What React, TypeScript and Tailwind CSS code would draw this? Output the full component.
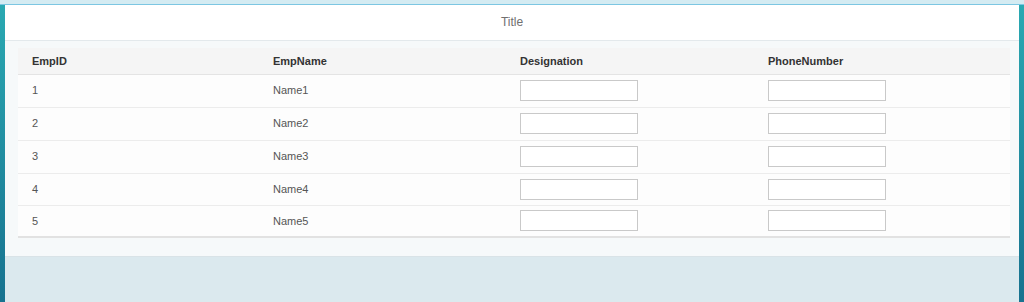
import React from 'react'

type Emp = { id: number; name: string }

const employees: Emp[] = [1, 2, 3, 4, 5].map((n) => ({ id: n, name: `Name${n}` }))
const rowHeights = ['h-[33px]', 'h-[33px]', 'h-[33px]', 'h-[32px]', 'h-[32px]']

export default function App() {
  return (
    <div
      className="flex h-[302px] w-[1024px] flex-col overflow-hidden bg-[#d4ebf2]"
      style={{ fontFamily: '"Liberation Sans", Arial, sans-serif' }}
    >
      {/* top strip */}
      <div className="h-[5px] shrink-0 border-b border-[#7cc6e2]" />
      <div className="flex-1 bg-gradient-to-b from-[#2aa9b2] to-[#17728f] px-[5px]">
        <div className="flex h-full flex-col bg-[#dbe9ee]">
          {/* panel heading */}
          <div className="flex h-[36px] items-center justify-center border-b border-[#e3e9ec] bg-white pb-[2px] text-[12px] text-[#707070]">
            Title
          </div>

          {/* panel body */}
          <div className="border-b border-[#d9e3e7] bg-[#f6f9fa] pb-[18px] pl-[13px] pr-[9px] pt-[7px]">
            <table className="w-full table-fixed border-collapse border-b-2 border-[#e2e2e2] bg-[#fdfdfd] text-[11px]">
              <colgroup>
                <col className="w-[241px]" />
                <col className="w-[247px]" />
                <col className="w-[248px]" />
                <col />
              </colgroup>
              <thead>
                <tr className="h-[26px] border-b border-[#e4e4e4] bg-[#f5f5f5] text-left font-bold text-[#333]">
                  <th className="pl-[14px]">EmpID</th>
                  <th className="pl-[14px]">EmpName</th>
                  <th className="pl-[14px]">Designation</th>
                  <th className="pl-[14px]">PhoneNumber</th>
                </tr>
              </thead>
              <tbody className="text-[#555]">
                {employees.map((e, i) => (
                  <tr
                    key={e.id}
                    className={`${rowHeights[i]} ${i < employees.length - 1 ? 'border-b border-[#ececec]' : ''}`}
                  >
                    <td className="pl-[14px]">{e.id}</td>
                    <td className="pl-[14px]">{e.name}</td>
                    <td className="pl-[14px]">
                      <input className="block h-[21px] w-[118px] border border-[#c9c9c9] bg-white" />
                    </td>
                    <td className="pl-[14px]">
                      <input className="block h-[21px] w-[118px] border border-[#c9c9c9] bg-white" />
                    </td>
                  </tr>
                ))}
              </tbody>
            </table>
          </div>
        </div>
      </div>
    </div>
  )
}
